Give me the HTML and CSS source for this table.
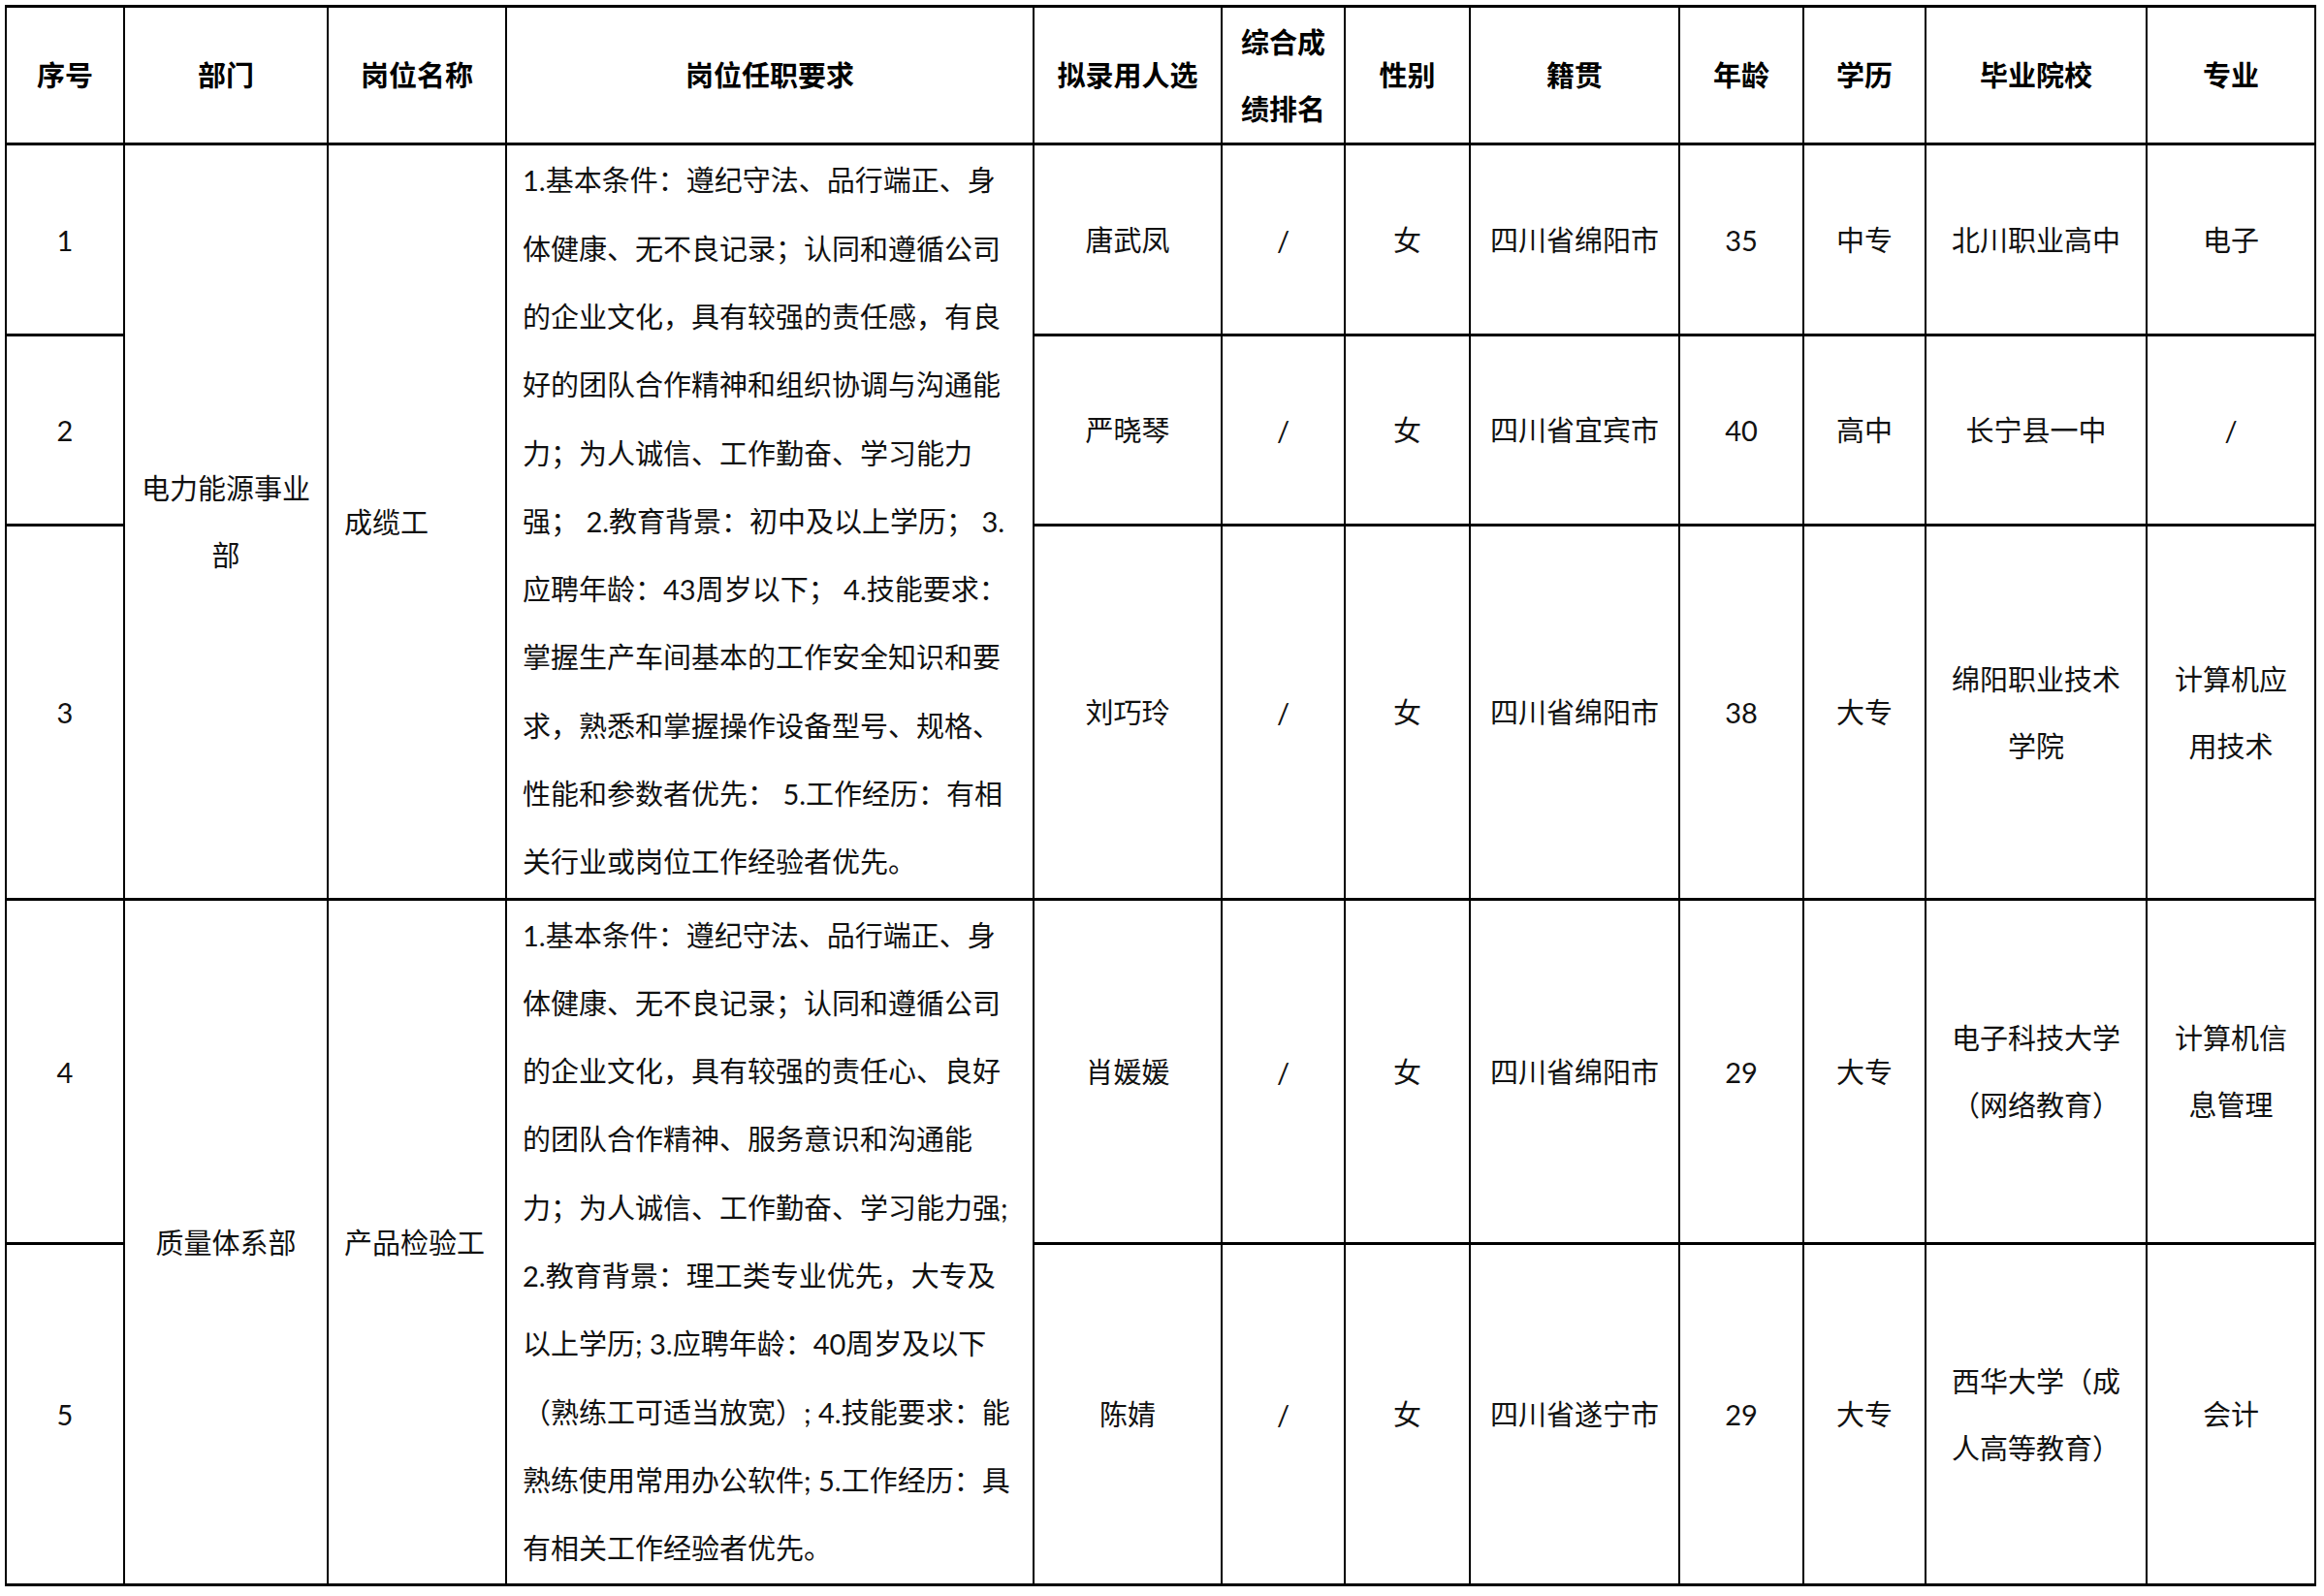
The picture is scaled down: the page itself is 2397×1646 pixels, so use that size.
FILE: index.html
```html
<!DOCTYPE html>
<html lang="zh-CN">
<head>
<meta charset="utf-8">
<title>拟录用人员名单</title>
<link rel="stylesheet" href="styles.css">
</head>
<body>
<table class="roster">
  <colgroup>
    <col class="c-no">
    <col class="c-dept">
    <col class="c-post">
    <col class="c-req">
    <col class="c-name">
    <col class="c-rank">
    <col class="c-sex">
    <col class="c-origin">
    <col class="c-age">
    <col class="c-edu">
    <col class="c-school">
    <col class="c-major">
  </colgroup>
  <thead>
    <tr class="r-head">
      <th>序号</th>
      <th>部门</th>
      <th>岗位名称</th>
      <th>岗位任职要求</th>
      <th>拟录用人选</th>
      <th>综合成<br>绩排名</th>
      <th>性别</th>
      <th>籍贯</th>
      <th>年龄</th>
      <th>学历</th>
      <th>毕业院校</th>
      <th>专业</th>
    </tr>
  </thead>
  <tbody>
    <tr class="r1">
      <td>1</td>
      <td rowspan="3">电力能源事业<br>部</td>
      <td rowspan="3" class="left">成缆工</td>
      <td rowspan="3" class="req">
        <span class="ln">1.基本条件：遵纪守法、品行端正、身</span>
        <span class="ln">体健康、无不良记录；认同和遵循公司</span>
        <span class="ln">的企业文化，具有较强的责任感，有良</span>
        <span class="ln">好的团队合作精神和组织协调与沟通能</span>
        <span class="ln">力；为人诚信、工作勤奋、学习能力</span>
        <span class="ln">强； 2.教育背景：初中及以上学历； 3.</span>
        <span class="ln">应聘年龄：43周岁以下； 4.技能要求：</span>
        <span class="ln">掌握生产车间基本的工作安全知识和要</span>
        <span class="ln">求，熟悉和掌握操作设备型号、规格、</span>
        <span class="ln">性能和参数者优先： 5.工作经历：有相</span>
        <span class="ln">关行业或岗位工作经验者优先。</span>
      </td>
      <td>唐武凤</td>
      <td>/</td>
      <td>女</td>
      <td>四川省绵阳市</td>
      <td>35</td>
      <td>中专</td>
      <td>北川职业高中</td>
      <td>电子</td>
    </tr>
    <tr class="r2">
      <td>2</td>
      <td>严晓琴</td>
      <td>/</td>
      <td>女</td>
      <td>四川省宜宾市</td>
      <td>40</td>
      <td>高中</td>
      <td>长宁县一中</td>
      <td>/</td>
    </tr>
    <tr class="r3">
      <td>3</td>
      <td>刘巧玲</td>
      <td>/</td>
      <td>女</td>
      <td>四川省绵阳市</td>
      <td>38</td>
      <td>大专</td>
      <td>绵阳职业技术<br>学院</td>
      <td>计算机应<br>用技术</td>
    </tr>
    <tr class="r4">
      <td>4</td>
      <td rowspan="2">质量体系部</td>
      <td rowspan="2" class="left">产品检验工</td>
      <td rowspan="2" class="req">
        <span class="ln">1.基本条件：遵纪守法、品行端正、身</span>
        <span class="ln">体健康、无不良记录；认同和遵循公司</span>
        <span class="ln">的企业文化，具有较强的责任心、良好</span>
        <span class="ln">的团队合作精神、服务意识和沟通能</span>
        <span class="ln">力；为人诚信、工作勤奋、学习能力强;</span>
        <span class="ln">2.教育背景：理工类专业优先，大专及</span>
        <span class="ln">以上学历; 3.应聘年龄：40周岁及以下</span>
        <span class="ln">（熟练工可适当放宽）; 4.技能要求：能</span>
        <span class="ln">熟练使用常用办公软件; 5.工作经历：具</span>
        <span class="ln">有相关工作经验者优先。</span>
      </td>
      <td>肖媛媛</td>
      <td>/</td>
      <td>女</td>
      <td>四川省绵阳市</td>
      <td>29</td>
      <td>大专</td>
      <td>电子科技大学<br>（网络教育）</td>
      <td>计算机信<br>息管理</td>
    </tr>
    <tr class="r5">
      <td>5</td>
      <td>陈婧</td>
      <td>/</td>
      <td>女</td>
      <td>四川省遂宁市</td>
      <td>29</td>
      <td>大专</td>
      <td>西华大学（成<br>人高等教育）</td>
      <td>会计</td>
    </tr>
  </tbody>
</table>
</body>
</html>
```

FILE: styles.css
```css
html, body {
  margin: 0;
  padding: 0;
  background: #ffffff;
}

.roster {
  border-collapse: collapse;
  table-layout: fixed;
  width: 2384px;
  margin: 5px 0 0 5px;
  font-family: "Lato", "Noto Sans CJK SC", sans-serif;
  font-size: 29px;
  color: #111111;
}

.c-no { width: 122px; }
.c-dept { width: 210px; }
.c-post { width: 184px; }
.c-req { width: 544px; }
.c-name { width: 194px; }
.c-rank { width: 127px; }
.c-sex { width: 129px; }
.c-origin { width: 216px; }
.c-age { width: 128px; }
.c-edu { width: 126px; }
.c-school { width: 228px; }
.c-major { width: 174px; }

.roster th,
.roster td {
  border-style: solid;
  border-color: #000000;
  border-width: 3px 2px;
  padding: 0 4px;
  text-align: center;
  vertical-align: middle;
  line-height: 69px;
  white-space: nowrap;
  overflow: hidden;
}

.roster th {
  font-weight: 700;
  color: #000000;
}

.r-head { height: 142px; }
.r1 { height: 197px; }
.r2 { height: 196px; }
.r3 { height: 386px; }
.r4 { height: 355px; }
.r5 { height: 352px; }

.roster td.left {
  text-align: left;
  padding-left: 16px;
}

.roster td.req {
  text-align: left;
  padding: 0 8px 0 16px;
  line-height: 70.3px;
}

.ln {
  display: block;
}
```
